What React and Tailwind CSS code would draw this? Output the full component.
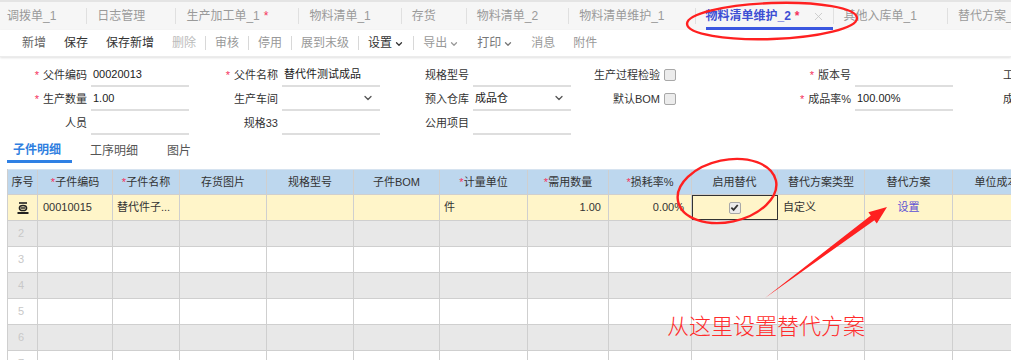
import React from 'react';
import { ChevronDown, X } from 'lucide-react';

const topTabs = [
  { label: '调拨单_1' },
  { label: '日志管理' },
  { label: '生产加工单_1', dirty: true },
  { label: '物料清单_1' },
  { label: '存货' },
  { label: '物料清单_2' },
  { label: '物料清单维护_1' },
  { label: '物料清单维护_2', dirty: true, active: true },
  { label: '其他入库单_1' },
  { label: '替代方案_1' },
];

const toolbar = [
  { label: '新增', tone: 'text-[#666]' },
  { label: '保存', tone: 'text-[#333]' },
  { label: '保存新增', tone: 'text-[#333]' },
  { label: '删除', tone: 'text-[#bbb]', sep: true },
  { label: '审核', tone: 'text-[#999]', sep: true },
  { label: '停用', tone: 'text-[#999]', sep: true },
  { label: '展到末级', tone: 'text-[#999]', sep: true },
  { label: '设置', tone: 'text-[#333]', drop: true, sep: true },
  { label: '导出', tone: 'text-[#999]', drop: true },
  { label: '打印', tone: 'text-[#777]', drop: true },
  { label: '消息', tone: 'text-[#999]' },
  { label: '附件', tone: 'text-[#999]' },
];

// 每行 6 列，每列 191px
const formRows = [
  [
    { label: '父件编码', req: true, value: '00020013' },
    { label: '父件名称', req: true, value: '替代件测试成品' },
    { label: '规格型号' },
    { label: '生产过程检验', check: true },
    { label: '版本号', req: true },
    { label: '工艺路线', cut: true },
  ],
  [
    { label: '生产数量', req: true, value: '1.00' },
    { label: '生产车间', select: true },
    { label: '预入仓库', select: true, value: '成品仓' },
    { label: '默认BOM', check: true },
    { label: '成品率%', req: true, value: '100.00%' },
    { label: '成本计算', cut: true },
  ],
  [{ label: '人员' }, { label: '规格33' }, { label: '公用项目' }],
];

const columns = [
  { title: '序号', w: 'w-[30px]' },
  { title: '子件编码', w: 'w-[75px]', req: true },
  { title: '子件名称', w: 'w-[67px]', req: true },
  { title: '存货图片', w: 'w-[87px]' },
  { title: '规格型号', w: 'w-[87px]' },
  { title: '子件BOM', w: 'w-[86px]' },
  { title: '计量单位', w: 'w-[88px]', req: true },
  { title: '需用数量', w: 'w-[81px]', req: true },
  { title: '损耗率%', w: 'w-[83px]', req: true },
  { title: '启用替代', w: 'w-[86px]' },
  { title: '替代方案类型', w: 'w-[87px]' },
  { title: '替代方案', w: 'w-[88px]' },
  { title: '单位成本', w: 'w-[88px]' },
];

const RowIcon = () => (
  <svg width="14" height="14" viewBox="0 0 14 14" fill="none" stroke="#222">
    <line x1="3" y1="2" x2="11" y2="2" strokeWidth="1.6" />
    <ellipse cx="7" cy="7" rx="3.6" ry="2.6" strokeWidth="1.5" />
    <line x1="4.5" y1="7" x2="9.5" y2="7" strokeWidth="1.4" />
    <line x1="1.5" y1="12" x2="12.5" y2="12" strokeWidth="2" />
  </svg>
);

const Checkbox = ({ checked }) => (
  <span className="w-[12px] h-[12px] rounded-[2px] border border-[#a8a8a8] bg-[#ececec] flex items-center justify-center">
    {checked && (
      <svg width="9" height="9" viewBox="0 0 10 10">
        <path d="M1.5 5.2 L4 7.6 L8.6 2.2" fill="none" stroke="#333" strokeWidth="2" />
      </svg>
    )}
  </span>
);

const FormField = ({ f }) => {
  if (f.cut) {
    // 右边缘被截断的字段
    return (
      <div className="w-[191px] shrink-0 flex items-center h-full pl-[48px] text-[11px] text-[#333] whitespace-nowrap">
        {f.label}
      </div>
    );
  }
  return (
    <div className="w-[191px] shrink-0 flex items-center h-full">
      <div className="w-[87px] shrink-0 text-right text-[11px] text-[#333] whitespace-nowrap">
        {f.req && <span className="text-[#f5325c] mr-[4px]">*</span>}
        {f.label}
      </div>
      {f.check ? (
        <div className="ml-[4px]">
          <Checkbox />
        </div>
      ) : (
        <div className="ml-[4px] w-[98px] h-full border-b-2 border-[#dedede] flex items-center justify-between pl-[2px] pr-[6px] text-[11px] text-[#222]">
          <span>{f.value || ''}</span>
          {f.select && <ChevronDown size={12} strokeWidth={2.6} className="text-[#555]" />}
        </div>
      )}
    </div>
  );
};

const Cell = ({ col, children, className = '' }) => (
  <div className={`${col.w} shrink-0 h-full border-r border-[#cfcfcf] flex items-center text-[11px] ${className}`}>
    {children}
  </div>
);

export default function App() {
  const blankRows = [2, 3, 4, 5, 6, 7];
  return (
    <div className="relative w-[1011px] h-[360px] overflow-hidden bg-white" style={{ fontFamily: '"Liberation Sans", "Noto Sans CJK SC", sans-serif' }}>
      {/* 顶部页签 */}
      <div className="h-[30px] bg-[#f6f6f6] border-t-2 border-[#e4e4e4] flex items-stretch text-[12px] text-[#9a9a9a] whitespace-nowrap">
        {topTabs.map((t, i) => (
          <div key={t.label} className="flex items-center shrink-0">
            {t.active ? (
              <div className="flex items-center h-full pl-[10px]">
                <div className="flex items-center h-full border-b-[3px] border-[#3b57e0] pt-[3px]">
                  <span className="font-bold text-[#3d4fd4]">{t.label}</span>
                  <span className="text-[#f5325c] ml-[4px] font-bold">*</span>
                  <X size={13} strokeWidth={1.5} className="text-[#c4c4c4] ml-[12px] mr-[8px]" />
                </div>
              </div>
            ) : (
              <div className={`flex items-center h-full ${i === 0 ? 'pl-[7px]' : 'pl-[10px]'} pr-[30px]`}>
                <span>{t.label}</span>
                {t.dirty && <span className="text-[#f5325c] ml-[4px]">*</span>}
              </div>
            )}
            <span className="w-px h-[16px] bg-[#e0e0e0]" />
          </div>
        ))}
      </div>

      {/* 工具栏 */}
      <div className="h-[27px] bg-white flex items-center pl-[13px] text-[12px] shadow-[0_1px_2px_rgba(0,0,0,0.12)] border-b border-[#ececec] relative">
        {toolbar.map((b) => (
          <React.Fragment key={b.label}>
            <span className={`px-[9px] flex items-center ${b.tone}`}>
              {b.label}
              {b.drop && <ChevronDown size={10} strokeWidth={3} className="ml-[2px] mt-[1px]" />}
            </span>
            {b.sep && <span className="w-px h-[14px] bg-[#d8d8d8]" />}
          </React.Fragment>
        ))}
      </div>

      {/* 表头表单 */}
      <div className="mt-[6px] flex flex-col whitespace-nowrap">
        {formRows.map((row, ri) => (
          <div key={ri} className="h-[24px] flex">
            {row.map((f) => (
              <FormField key={f.label} f={f} />
            ))}
          </div>
        ))}
      </div>

      {/* 子页签 */}
      <div className="mt-[3px] h-[25px] flex items-stretch text-[12px] text-[#555]">
        <div className="ml-[7px] pl-[6px] pr-[11px] flex items-center border-b-[3px] border-[#2f80e4] font-bold text-[#2f7fe0] pt-[2px]">子件明细</div>
        <div className="ml-[18px] flex items-center">工序明细</div>
        <div className="ml-[29px] flex items-center">图片</div>
      </div>

      {/* 子件表格 */}
      <div className="mt-[6px] ml-[7px] border-l border-[#cfcfcf] w-[1100px]">
        <div className="h-[26px] flex bg-[#bdd7ee] border-b border-[#cfcfcf] border-t border-t-[#d6e3f0] text-[#333]">
          {columns.map((c) => (
            <Cell key={c.title} col={c} className="justify-center">
              {c.req && <span className="text-[#f5325c]">*</span>}
              {c.title}
            </Cell>
          ))}
        </div>
        <div className="h-[26px] flex bg-[#fff5c9] border-b border-[#cfcfcf] text-[#333]">
          <Cell col={columns[0]} className="justify-center"><RowIcon /></Cell>
          <Cell col={columns[1]} className="pl-[5px]">00010015</Cell>
          <Cell col={columns[2]} className="pl-[4px]">替代件子...</Cell>
          <Cell col={columns[3]} />
          <Cell col={columns[4]} />
          <Cell col={columns[5]} />
          <Cell col={columns[6]} className="pl-[4px]">件</Cell>
          <Cell col={columns[7]} className="justify-end pr-[7px]">1.00</Cell>
          <Cell col={columns[8]} className="justify-end pr-[7px]">0.00%</Cell>
          <Cell col={columns[9]} className="justify-center outline outline-1 outline-[#333] -outline-offset-1">
            <Checkbox checked />
          </Cell>
          <Cell col={columns[10]} className="pl-[5px]">自定义</Cell>
          <Cell col={columns[11]} className="justify-center text-[#5b4fd6]">设置</Cell>
          <Cell col={columns[12]} />
        </div>
        {blankRows.map((n) => (
          <div key={n} className={`h-[26px] flex border-b border-[#cfcfcf] ${n % 2 === 0 ? 'bg-[#e8e8e8]' : 'bg-white'}`}>
            {columns.map((c, ci) => (
              <Cell key={c.title} col={c} className="pl-[10px] text-[#c8c8c8]">
                {ci === 0 ? n : ''}
              </Cell>
            ))}
          </div>
        ))}
      </div>

      {/* 标注 */}
      <svg className="absolute inset-0 pointer-events-none" width="1011" height="360" viewBox="0 0 1011 360">
        <ellipse cx="772" cy="21" rx="85" ry="18" fill="none" stroke="#ff2020" strokeWidth="2.4" transform="rotate(-2 772 21)" />
        <ellipse cx="727" cy="191" rx="50" ry="31" fill="none" stroke="#ff2020" strokeWidth="2.4" transform="rotate(-12 727 191)" />
        <polygon points="765,298 870.8,215.4 868.4,212.2 887,207 876.8,223.4 874.4,220.2" fill="#ff2020" />
      </svg>
      <div className="absolute left-[667px] top-[311px] text-[22px] leading-[26px] text-[#ff2b2b] whitespace-nowrap" style={{ fontFamily: '"Noto Sans CJK SC", sans-serif', fontWeight: 300 }}>
        从这里设置替代方案
      </div>
    </div>
  );
}
